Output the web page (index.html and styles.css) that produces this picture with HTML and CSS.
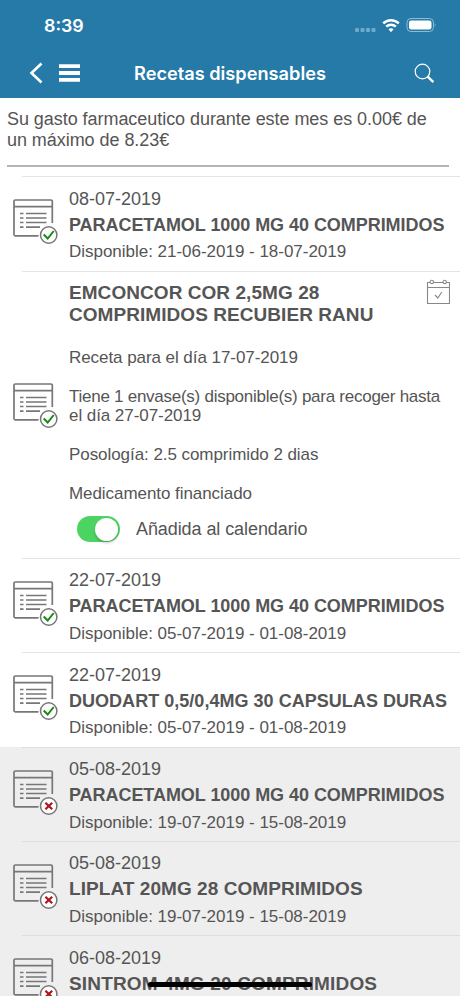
FILE: index.html
```html
<!DOCTYPE html>
<html lang="es">
  <head>
    <meta charset="UTF-8" />
    <meta name="viewport" content="width=device-width, initial-scale=1.0" />
    <title>Recetas dispensables</title>
    <link rel="stylesheet" href="styles.css">
  </head>
  <body>
    <!-- Iconos -->
    <svg width="0" height="0" class="sprite">
      <symbol id="receta" viewBox="0 0 46 46">
        <path d="M39.300 24V2.300a1.300 1.300 0 0 0-1.300-1.300H2.300a1.300 1.300 0 0 0-1.300 1.300V35.500a1.300 1.300 0 0 0 1.300 1.300H25.500M1 7.700H39.300" fill="none" stroke="#777" stroke-width="1.700" />
        <path d="M7 14.500h3.500M7 19h3.500M7 23.500h3.500M7 28.200h3.500M13 14.500h20.500M13 19h20.500M13 23.500h20.500M13 28.200h14" fill="none" stroke="#777" stroke-width="1.700" />
        <circle cx="35.700" cy="36" r="8.200" class="badge" stroke="#777" stroke-width="1.500" />
      </symbol>
      <symbol id="ok" viewBox="0 0 46 46">
        <use href="#receta" />
        <path d="M30.700 35.500l4 4 6-7.500" fill="none" stroke="#148a14" stroke-width="2" />
      </symbol>
      <symbol id="no" viewBox="0 0 46 46">
        <use href="#receta" />
        <path d="M32.400 32.700l6.800 6.600M39.200 32.700l-6.800 6.600" fill="none" stroke="#b3141c" stroke-width="2.200" />
      </symbol>
    </svg>

    <div class="screen">
      <header>
        <div class="status">
          <span class="time">8:39</span>
          <svg class="status-icons" width="82" height="18" viewBox="0 0 82 18">
            <g fill="#6fa9c9">
              <rect x="0" y="11" width="4" height="4" rx="1" />
              <rect x="5.500" y="11" width="4" height="4" rx="1" />
              <rect x="11" y="11" width="4" height="4" rx="1" />
              <rect x="16.500" y="11" width="4" height="4" rx="1" />
            </g>
            <g fill="none" stroke="#fff" stroke-width="2.500">
              <path d="M28.200 6.300a11.200 11.200 0 0 1 15.600 0" />
              <path d="M31.200 9.600a7 7 0 0 1 9.600 0" />
            </g>
            <path d="M33.500 12.300a3.800 3.800 0 0 1 5 0L36 15.200z" fill="#fff" />
            <rect x="52" y="1.500" width="26.500" height="13" rx="4" fill="none" stroke="#8fbcd5" />
            <rect x="54" y="3.500" width="22.500" height="9" rx="2.300" fill="#fff" />
            <path d="M79.800 6q1.800 2 0 4z" fill="#8fbcd5" />
          </svg>
        </div>
        <nav>
          <svg class="back" width="14" height="22" viewBox="0 0 14 22">
            <path d="M12.500 1.500L2.500 11l10 9.500" fill="none" stroke="#fff" stroke-width="2.600" />
          </svg>
          <svg class="menu" width="21" height="18" viewBox="0 0 21 18">
            <path d="M0 2.200h21M0 9h21M0 15.800h21" stroke="#fff" stroke-width="3.800" />
          </svg>
          <h1>Recetas dispensables</h1>
          <svg class="search" width="21" height="21" viewBox="0 0 21 21">
            <circle cx="8.500" cy="8.500" r="7.300" fill="none" stroke="#fff" stroke-width="1.200" />
            <path d="M13.700 13.700l5.700 5.500" stroke="#fff" stroke-width="2.300" />
          </svg>
        </nav>
      </header>

      <p class="gasto">Su gasto farmaceutico durante este mes es 0.00€ de<br>un máximo de 8.23€</p>

      <ul class="recetas">
        <li>
          <svg class="icon"><use href="#ok" /></svg>
          <div>
            <p class="fecha">08-07-2019</p>
            <h2 class="largo">PARACETAMOL 1000 MG 40 COMPRIMIDOS</h2>
            <p class="disponible">Disponible: 21-06-2019 - 18-07-2019</p>
          </div>
        </li>
        <li class="abierta">
          <svg class="icon"><use href="#ok" /></svg>
          <div class="detalle">
            <h2>EMCONCOR COR 2,5MG 28<br>COMPRIMIDOS RECUBIER RANU</h2>
            <p>Receta para el día 17-07-2019</p>
            <p class="envases">Tiene 1 envase(s) disponible(s) para recoger hasta<br>el día 27-07-2019</p>
            <p>Posología: 2.5 comprimido 2 dias</p>
            <p>Medicamento financiado</p>
            <label class="calendario">
              <span class="switch"></span>
              <span>Añadida al calendario</span>
            </label>
          </div>
          <svg class="cal-icon" width="24" height="26" viewBox="0 0 24 26">
            <g fill="none" stroke="#888" stroke-width="1.100">
              <path d="M4 3.500H1.500v21h22v-21H20.500M7.500 3.500h9.500M1.500 8.500h22" />
              <circle cx="5.800" cy="3" r="1.700" />
              <circle cx="18.700" cy="3" r="1.700" />
              <path d="M9 16l2.800 3 4-6" />
            </g>
          </svg>
        </li>
        <li>
          <svg class="icon"><use href="#ok" /></svg>
          <div>
            <p class="fecha">22-07-2019</p>
            <h2 class="largo">PARACETAMOL 1000 MG 40 COMPRIMIDOS</h2>
            <p class="disponible">Disponible: 05-07-2019 - 01-08-2019</p>
          </div>
        </li>
        <li>
          <svg class="icon"><use href="#ok" /></svg>
          <div>
            <p class="fecha">22-07-2019</p>
            <h2 class="capsulas">DUODART 0,5/0,4MG 30 CAPSULAS DURAS</h2>
            <p class="disponible">Disponible: 05-07-2019 - 01-08-2019</p>
          </div>
        </li>
        <li class="inactiva">
          <svg class="icon"><use href="#no" /></svg>
          <div>
            <p class="fecha">05-08-2019</p>
            <h2 class="largo">PARACETAMOL 1000 MG 40 COMPRIMIDOS</h2>
            <p class="disponible">Disponible: 19-07-2019 - 15-08-2019</p>
          </div>
        </li>
        <li class="inactiva">
          <svg class="icon"><use href="#no" /></svg>
          <div>
            <p class="fecha">05-08-2019</p>
            <h2>LIPLAT 20MG 28 COMPRIMIDOS</h2>
            <p class="disponible">Disponible: 19-07-2019 - 15-08-2019</p>
          </div>
        </li>
        <li class="inactiva">
          <svg class="icon"><use href="#no" /></svg>
          <div>
            <p class="fecha">06-08-2019</p>
            <h2 class="sintrom">SINTROM 4MG 20 COMPRIMIDOS</h2>
          </div>
        </li>
      </ul>
      <div class="home-bar"></div>
    </div>
  </body>
</html>
```

FILE: styles.css
```css
* {
  box-sizing: border-box;
}
body,
h1,
h2,
p,
ul {
  margin: 0;
  padding: 0;
}
body {
  font-family: "Liberation Sans", Arial, sans-serif;
  font-size: 17px;
  background: #fff;
  color: #555;
}
.sprite {
  position: absolute;
}
.screen {
  position: relative;
  width: 460px;
  height: 996px;
  overflow: hidden;
}
header {
  height: 98px;
  background: #257aa8;
  color: #fff;
  font-family: Inter, sans-serif;
}
.status {
  display: flex;
  justify-content: space-between;
  height: 50px;
  padding: 16px 23px 0 44px;
}
.status-icons {
  margin-top: 1px;
}
.time {
  font-size: 17.800px;
  font-weight: 600;
  line-height: 20px;
}
nav {
  display: flex;
  align-items: center;
  height: 46px;
  padding: 0 25px 0 29px;
}
.menu {
  margin-left: 16px;
}
h1 {
  flex: 1;
  margin-left: 54px;
  font-size: 18.200px;
  font-weight: 600;
  line-height: 24px;
  white-space: nowrap;
}
.gasto {
  height: 69px;
  margin: 0 11px 0 7px;
  padding-top: 11px;
  border-bottom: 2px solid #b5b5b5;
  font-size: 18px;
  line-height: 20.500px;
  letter-spacing: -0.050px;
  white-space: nowrap;
}
.recetas {
  margin-top: 9.400px;
  list-style: none;
}
li {
  display: flex;
  height: 94.400px;
  padding-top: 9.500px;
  background: linear-gradient(#e4e4e4, #e4e4e4) 22px 0 / 100% 1px no-repeat;
  white-space: nowrap;
}
.icon {
  flex: none;
  width: 46px;
  height: 46px;
  margin: 13.600px 9.600px 0 13.400px;
}
.badge {
  fill: #fff;
}
.fecha {
  font-size: 18px;
  line-height: 26px;
}
h2 {
  font-size: 19px;
  line-height: 26px;
  letter-spacing: 0.060px;
}
.largo {
  font-size: 18px;
  letter-spacing: -0.050px;
}
.capsulas {
  font-size: 18px;
  letter-spacing: 0.030px;
}
.sintrom {
  letter-spacing: 0.160px;
}
.disponible {
  padding-top: 1.500px;
  line-height: 26px;
  letter-spacing: -0.020px;
}
.abierta {
  height: 287px;
  padding-top: 11px;
}
.abierta .icon {
  margin-top: 101.600px;
}
.detalle {
  flex: 1;
  min-width: 0;
}
.detalle h2 {
  line-height: 22px;
}
.detalle p {
  margin-top: 19px;
  line-height: 19.700px;
  letter-spacing: -0.060px;
}
.detalle h2 + p {
  margin-top: 22.300px;
}
.detalle .envases::first-line {
  letter-spacing: -0.260px;
}
.calendario {
  display: flex;
  align-items: center;
  gap: 16px;
  margin: 12.500px 0 0 8px;
  font-size: 18px;
  letter-spacing: -0.080px;
}
.switch {
  display: flex;
  justify-content: flex-end;
  width: 43px;
  height: 26px;
  padding: 1.500px;
  border-radius: 13px;
  background: #4cd463;
}
.switch::after {
  content: "";
  width: 23px;
  height: 23px;
  border-radius: 50%;
  background: #fff;
  box-shadow: 0 2px 3px rgba(0, 0, 0, 0.2);
}
.cal-icon {
  flex: none;
  margin: -3px 10px 0 0;
}
.inactiva {
  background-color: #eee;
  background-image: linear-gradient(#dedede, #dedede);
}
.inactiva .badge {
  fill: #eee;
}
.home-bar {
  position: absolute;
  left: 148px;
  bottom: 9px;
  width: 164px;
  height: 5px;
  border-radius: 3px;
  background: #000;
}
```
